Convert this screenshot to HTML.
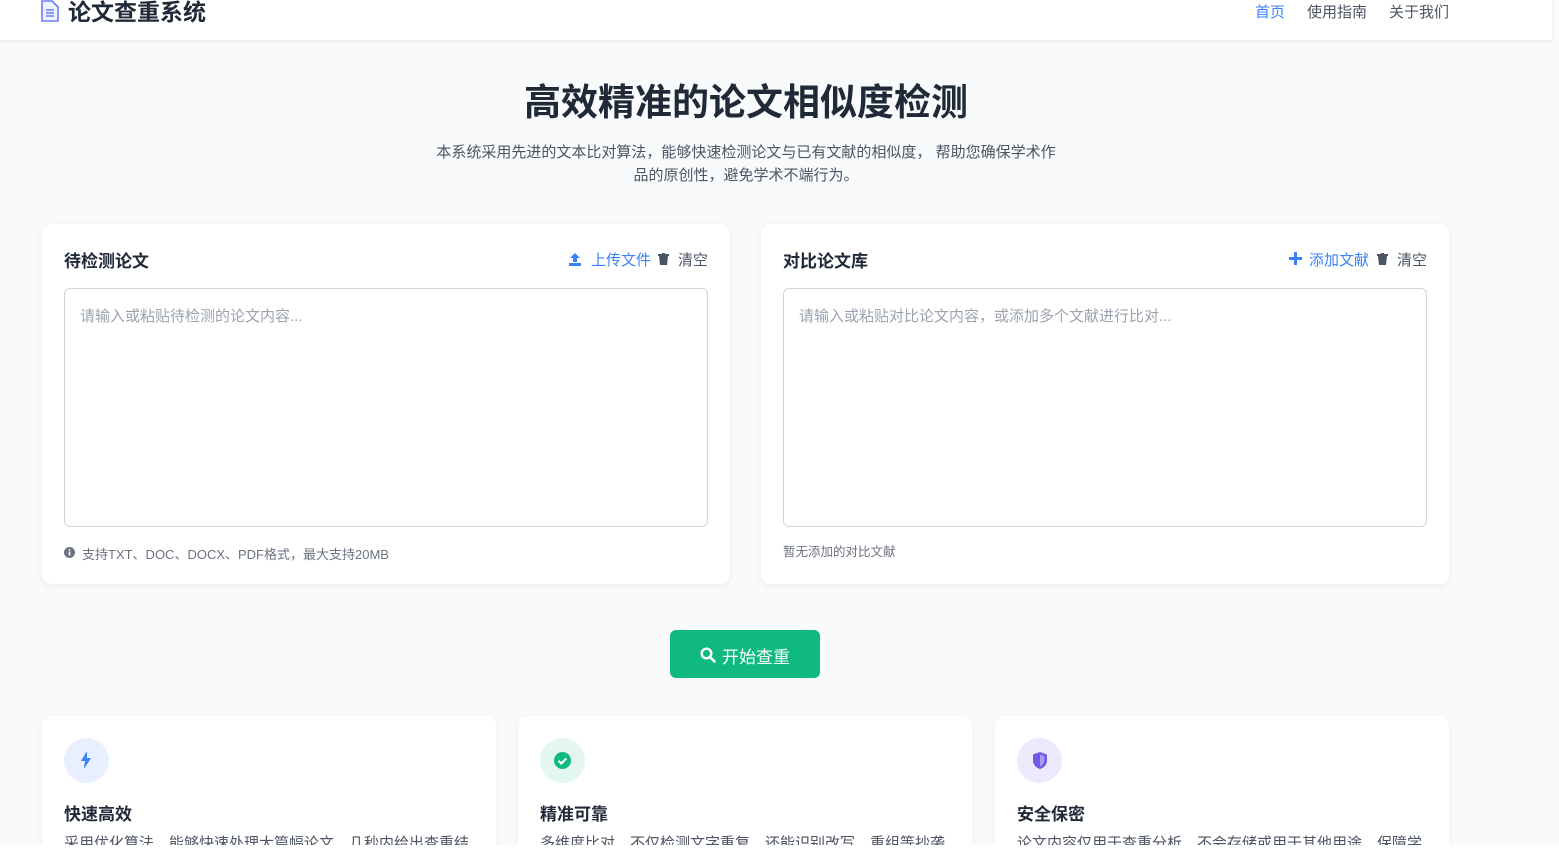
<!DOCTYPE html>
<html><head><meta charset="utf-8"><style>
*{margin:0;padding:0;box-sizing:border-box}
html,body{width:1559px;height:858px;overflow:hidden}
body{background:#f8fafc;font-family:"Liberation Sans","Noto Sans CJK SC",sans-serif;position:relative;color:#1f2937}
.a{position:absolute;white-space:nowrap}
.hdr{position:absolute;left:0;top:0;width:1552px;height:40px;background:#fff;box-shadow:0 1px 4px rgba(0,0,0,.08)}
.panel{position:absolute;background:#fff;border-radius:10px;box-shadow:0 2px 8px rgba(0,0,0,.06)}
.ta{position:absolute;border:1px solid #d1d5db;border-radius:6px;background:#fff}
.ph{position:absolute;left:15px;top:16px;font-size:15px;color:#9ca3af}
.pt{position:absolute;font-size:17px;font-weight:bold;color:#1f2937}
.card{position:absolute;top:716px;width:454px;height:142px;background:#fff;border-radius:10px 10px 0 0;box-shadow:0 2px 8px rgba(0,0,0,.05);overflow:hidden}
.ic{position:absolute;left:22px;top:22px;width:45px;height:45px;border-radius:50%}
.ct{position:absolute;left:22px;top:84px;font-size:17px;font-weight:bold}
.cd{position:absolute;left:22px;top:116px;font-size:15px;color:#4b5563;white-space:nowrap}
</style></head><body>
<div class="hdr">
<svg class="a" style="left:40px;top:0" width="20" height="22" viewBox="0 0 20 22"><path d="M2 1h10l6 6v14H2z" fill="#eef2ff" stroke="#6b7ff0" stroke-width="1.6"/><path d="M6 10h8M6 13h8M6 16h8" stroke="#6b7ff0" stroke-width="1.4"/></svg>
<div class="a" style="left:68px;top:-7px;font-size:23px;font-weight:bold;color:#1f2937">论文查重系统</div>
<div class="a" style="left:1255px;top:1px;font-size:15px;color:#3b82f6">首页</div>
<div class="a" style="left:1307px;top:1px;font-size:15px;color:#4b5563">使用指南</div>
<div class="a" style="left:1389px;top:1px;font-size:15px;color:#4b5563">关于我们</div>
</div>
<div class="a" style="left:0;width:1492px;text-align:center;top:72px;font-size:37px;font-weight:bold;color:#1f2937">高效精准的论文相似度检测</div>
<div class="a" style="left:0;width:1492px;text-align:center;top:141px;font-size:15px;line-height:23px;color:#4b5563;white-space:normal">本系统采用先进的文本比对算法，能够快速检测论文与已有文献的相似度， 帮助您确保学术作<br>品的原创性，避免学术不端行为。</div>

<div class="panel" style="left:42px;top:224px;width:688px;height:360px">
<div class="pt" style="left:22px;top:23px">待检测论文</div>
<svg class="a" style="left:526px;top:28px" width="14" height="14" viewBox="0 0 14 14"><path d="M7 1L2 6h3v4h4V6h3z M1 11h12v3H1z" fill="#3b82f6"/></svg>
<div class="a" style="left:549px;top:25px;font-size:15px;color:#3b82f6">上传文件</div>
<svg class="a" style="left:616px;top:29px" width="11" height="12" viewBox="0 0 11 12"><path d="M0 1h11v2H0zM4 0h3v1H4zM1 3h9l-1 9H2z" fill="#4b5563"/></svg>
<div class="a" style="left:636px;top:25px;font-size:15px;color:#4b5563">清空</div>
<div class="ta" style="left:22px;top:64px;width:644px;height:239px"><div class="ph">请输入或粘贴待检测的论文内容...</div></div>
<svg class="a" style="left:22px;top:323px" width="11" height="11" viewBox="0 0 11 11"><circle cx="5.5" cy="5.5" r="5.5" fill="#6b7280"/><rect x="4.7" y="4.5" width="1.6" height="4" fill="#fff"/><circle cx="5.5" cy="3" r="0.9" fill="#fff"/></svg>
<div class="a" style="left:40px;top:320px;font-size:13px;color:#6b7280">支持TXT、DOC、DOCX、PDF格式，最大支持20MB</div>
</div>

<div class="panel" style="left:761px;top:224px;width:688px;height:360px">
<div class="pt" style="left:22px;top:23px">对比论文库</div>
<svg class="a" style="left:528px;top:28px" width="13" height="13" viewBox="0 0 13 13"><path d="M5 0h3v5h5v3H8v5H5V8H0V5h5z" fill="#3b82f6"/></svg>
<div class="a" style="left:548px;top:25px;font-size:15px;color:#3b82f6">添加文献</div>
<svg class="a" style="left:616px;top:29px" width="11" height="12" viewBox="0 0 11 12"><path d="M0 1h11v2H0zM4 0h3v1H4zM1 3h9l-1 9H2z" fill="#4b5563"/></svg>
<div class="a" style="left:636px;top:25px;font-size:15px;color:#4b5563">清空</div>
<div class="ta" style="left:22px;top:64px;width:644px;height:239px"><div class="ph">请输入或粘贴对比论文内容，或添加多个文献进行比对...</div></div>
<div class="a" style="left:22px;top:317px;font-size:12.5px;color:#6b7280">暂无添加的对比文献</div>
</div>

<div class="a" style="left:670px;top:630px;width:150px;height:48px;background:#10b981;border-radius:6px"></div>
<svg class="a" style="left:700px;top:647px" width="16" height="16" viewBox="0 0 16 16"><circle cx="6.5" cy="6.5" r="4.8" fill="none" stroke="#fff" stroke-width="2.4"/><path d="M10 10l4.5 4.5" stroke="#fff" stroke-width="2.6" stroke-linecap="round"/></svg>
<div class="a" style="left:722px;top:643px;font-size:17px;color:#fff">开始查重</div>

<div class="card" style="left:42px"><div class="ic" style="background:#e8efff"></div>
<svg class="a" style="left:38px;top:35px" width="12" height="18" viewBox="0 0 12 18"><path d="M7 0L1 10h4l-1 8 7-11H7z" fill="#3b82f6"/></svg>
<div class="ct">快速高效</div><div class="cd">采用优化算法，能够快速处理大篇幅论文，几秒内给出查重结</div></div>
<div class="card" style="left:518px"><div class="ic" style="background:#e3f7ee"></div>
<svg class="a" style="left:36px;top:36px" width="17" height="17" viewBox="0 0 17 17"><circle cx="8.5" cy="8.5" r="8.5" fill="#10b981"/><path d="M4.5 8.8l2.8 2.7 5-5" fill="none" stroke="#fff" stroke-width="2.2"/></svg>
<div class="ct">精准可靠</div><div class="cd">多维度比对，不仅检测文字重复，还能识别改写、重组等抄袭</div></div>
<div class="card" style="left:995px"><div class="ic" style="background:#eeeafe"></div>
<svg class="a" style="left:38px;top:36px" width="14" height="17" viewBox="0 0 14 17"><path d="M7 0L0 2.5v6C0 13 3.5 16 7 17c3.5-1 7-4 7-8.5v-6z" fill="#6d5ce8"/><path d="M7 2.5v12c2-1 4.3-3 4.3-6V4.3z" fill="#a99ff2"/></svg>
<div class="ct">安全保密</div><div class="cd">论文内容仅用于查重分析，不会存储或用于其他用途，保障学</div></div>

<div class="a" style="left:0;top:845px;width:1559px;height:13px;background:#fff"></div>
</body></html>
